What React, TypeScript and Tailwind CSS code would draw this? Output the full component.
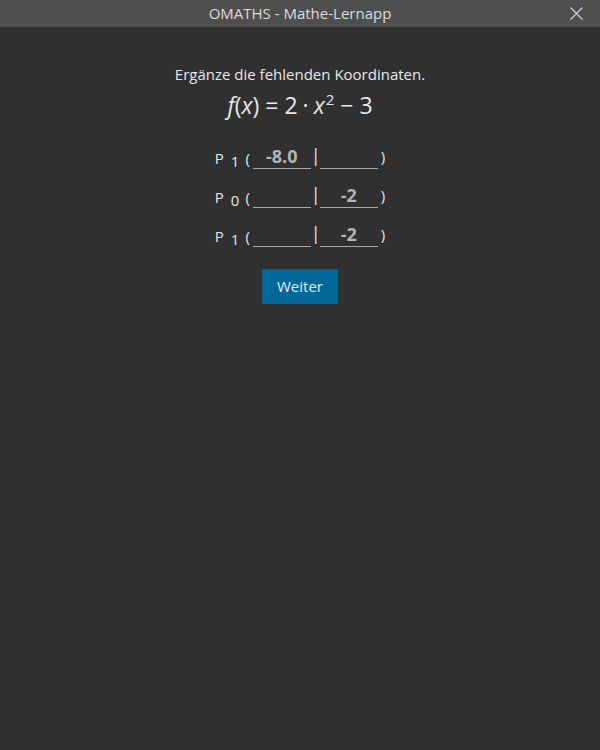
const FONT = { fontFamily: '"Open Sans", "Noto Sans", sans-serif' };

const rows = [
  { idx: "1", x: "-8.0", y: "" },
  { idx: "0", x: "", y: "-2" },
  { idx: "1", x: "", y: "-2" },
];

function Field({ value }: { value: string }) {
  return (
    <div className="w-[58px] h-[26px] border-b border-[#a8a8a8] flex items-end justify-center text-[18px] font-bold text-[#b4b4b4] leading-[24px]">
      {value}
    </div>
  );
}

export default function App() {
  return (
    <div className="w-[600px] h-[750px] bg-[#303030] flex flex-col text-[#e6e6e6]" style={FONT}>
      <div className="h-[27px] bg-[#4f4f4f] relative flex items-center justify-center text-[15px] text-[#dcdcdc]">
        OMATHS - Mathe-Lernapp
        <svg className="absolute right-[17px] top-[7px]" width="13" height="13" viewBox="0 0 13 13">
          <path d="M0.5 0.5 L12.5 12.5 M12.5 0.5 L0.5 12.5" stroke="#cfd6e4" strokeWidth="1.1" />
        </svg>
      </div>
      <div className="flex flex-col items-center pt-[37px]">
        <div className="text-[15px] leading-[21px] text-[#e8e8e8]">Ergänze die fehlenden Koordinaten.</div>
        <div className="text-[23px] leading-[30px] mt-[5px] text-[#e8e8e8] flex items-baseline">
          <span>
            <i>f</i>(<i>x</i>)
          </span>
          <span className="mx-[6px]">=</span>
          <span>2</span>
          <span className="mx-[5px]">·</span>
          <span>
            <i>x</i>
            <sup className="text-[15px] -top-[9px] ml-[1px]">2</sup>
          </span>
          <span className="mx-[6px]">−</span>
          <span>3</span>
        </div>
        <div className="flex flex-col gap-[13px] mt-[23px]">
          {rows.map((r, i) => (
            <div key={i} className="flex items-end h-[26px] text-[15px]">
              <span className="w-[38px] flex items-baseline">
                <span>P</span>
                <span className="ml-[7px] relative top-[3px]">{r.idx}</span>
                <span className="ml-[6px]">(</span>
              </span>
              <Field value={r.x} />
              <span className="w-[9px] text-center text-[18px] leading-[24px] mb-[2px]">|</span>
              <Field value={r.y} />
              <span className="ml-[3px] mb-[2px]">)</span>
            </div>
          ))}
        </div>
        <button className="mt-[22px] w-[76px] h-[35px] bg-[#006899] text-[15px] text-[#e8e8e8]">Weiter</button>
      </div>
    </div>
  );
}
